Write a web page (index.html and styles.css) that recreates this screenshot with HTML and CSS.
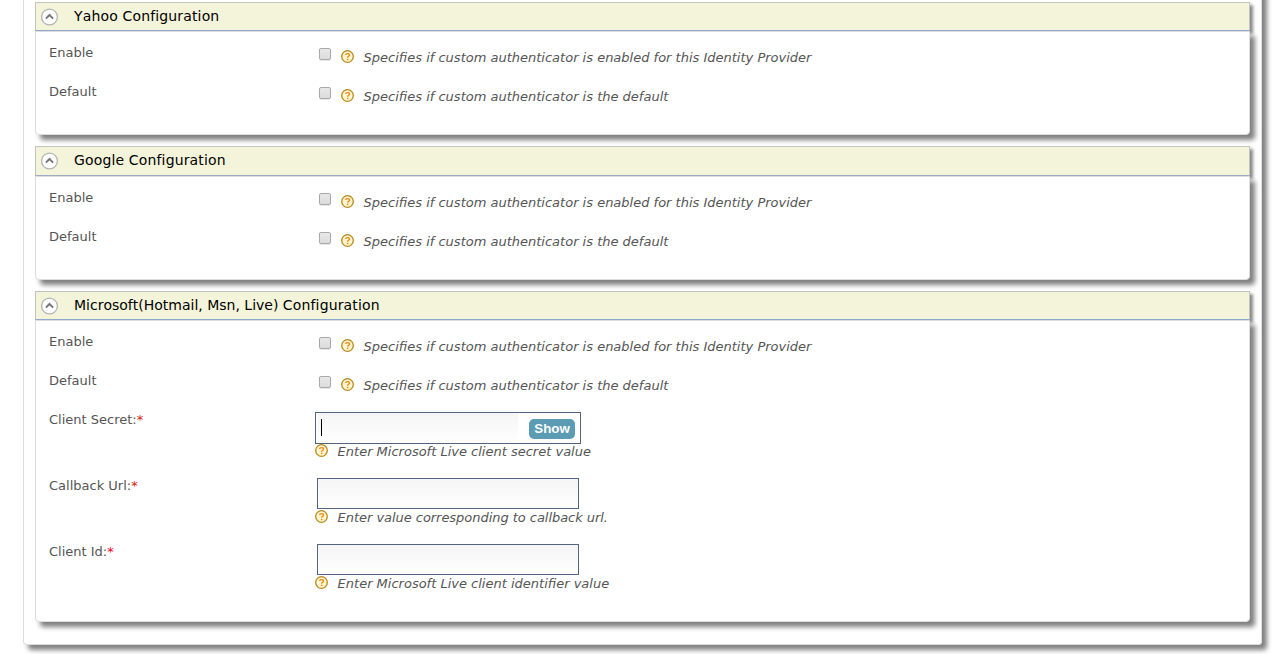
FILE: index.html
```
<!DOCTYPE html>
<html lang="en">
<head>
<meta charset="utf-8">
<title>Federated Authenticators</title>
<link rel="stylesheet" href="styles.css">
</head>
<body>
<svg class="defs" aria-hidden="true">
  <defs>
    <symbol id="chevron" viewBox="0 0 18 18">
      <circle cx="8.5" cy="9" r="7.9" fill="#fff" stroke="#b4b4b4" stroke-width="1.3"/>
      <path d="M4.9 10.6 8.5 7 12.1 10.6" fill="none" stroke="#777" stroke-width="2"/>
    </symbol>
    <symbol id="help" viewBox="0 0 13 13">
      <circle cx="6.5" cy="6.5" r="5.8" fill="#fff6cf" stroke="#b8891c" stroke-width="1.3"/>
      <path d="M4.6 5.1C4.6 3.2 8.5 3.1 8.5 5 8.5 6.3 6.6 6.2 6.6 7.8" fill="none" stroke="#ee8a22" stroke-width="1.4"/>
      <rect x="5.9" y="8.7" width="1.5" height="1.4" fill="#ee8a22"/>
    </symbol>
  </defs>
</svg>
<main class="panel">
  <section class="section">
    <h2 class="header"><svg class="toggle"><use href="#chevron"/></svg><span class="title wide">Yahoo Configuration</span></h2>
    <div class="body">
      <div class="row"><label class="label">Enable</label><div class="check"><input type="checkbox" class="box"><svg class="help"><use href="#help"/></svg><span class="hint">Specifies if custom authenticator is enabled for this Identity Provider</span></div></div>
      <div class="row"><label class="label">Default</label><div class="check"><input type="checkbox" class="box"><svg class="help"><use href="#help"/></svg><span class="hint">Specifies if custom authenticator is the default</span></div></div>
    </div>
  </section>
  <section class="section">
    <h2 class="header tall"><svg class="toggle"><use href="#chevron"/></svg><span class="title wide">Google Configuration</span></h2>
    <div class="body">
      <div class="row"><label class="label">Enable</label><div class="check"><input type="checkbox" class="box"><svg class="help"><use href="#help"/></svg><span class="hint">Specifies if custom authenticator is enabled for this Identity Provider</span></div></div>
      <div class="row"><label class="label">Default</label><div class="check"><input type="checkbox" class="box"><svg class="help"><use href="#help"/></svg><span class="hint">Specifies if custom authenticator is the default</span></div></div>
    </div>
  </section>
  <section class="section">
    <h2 class="header"><svg class="toggle"><use href="#chevron"/></svg><span class="title">Microsoft(Hotmail, Msn, Live) <span class="wide">Configuration</span></span></h2>
    <div class="body long">
      <div class="row"><label class="label">Enable</label><div class="check"><input type="checkbox" class="box"><svg class="help"><use href="#help"/></svg><span class="hint">Specifies if custom authenticator is enabled for this Identity Provider</span></div></div>
      <div class="row"><label class="label">Default</label><div class="check"><input type="checkbox" class="box"><svg class="help"><use href="#help"/></svg><span class="hint">Specifies if custom authenticator is the default</span></div></div>
      <div class="row field"><label class="label">Client Secret:<span class="required">*</span></label><div class="control"><div class="secret"><div class="entry"><span class="caret"></span></div><button class="show">Show</button></div><div class="note"><svg class="help"><use href="#help"/></svg><span class="hint">Enter Microsoft Live client secret value</span></div></div></div>
      <div class="row field"><label class="label">Callback Url:<span class="required">*</span></label><div class="control"><input type="text" class="text"><div class="note"><svg class="help"><use href="#help"/></svg><span class="hint tight">Enter value corresponding to callback url.</span></div></div></div>
      <div class="row field"><label class="label">Client Id:<span class="required bright">*</span></label><div class="control"><input type="text" class="text"><div class="note"><svg class="help"><use href="#help"/></svg><span class="hint">Enter Microsoft Live client identifier value</span></div></div></div>
    </div>
  </section>
</main>
</body>
</html>
```
FILE: styles.css
```
* { box-sizing: border-box; }
body {
  margin: 0;
  height: 654px;
  overflow: hidden;
  background: #fff;
  color: #555;
  font: 13px/16px "DejaVu Sans", Verdana, sans-serif;
}
.defs { display: none; }
.panel {
  width: 1239px;
  height: 655px;
  margin: -10px 0 0 23px;
  padding: 12px 11px 0;
  border: 1px solid #ddd;
  border-top: 0;
  border-radius: 0 0 4px 4px;
  box-shadow: 5px 5px 5px #808080;
}
.section { width: 1215px; margin-bottom: 11px; }
.header {
  display: flex;
  align-items: flex-start;
  gap: 15px;
  height: 29px;
  margin: 0;
  padding: 5px 5px 0;
  border: 1px solid #c3c3c3;
  border-bottom-color: #8fa9d0;
  background: #f4f4da;
  color: #000;
  font-size: 14px;
  font-weight: normal;
  font-kerning: none;
  line-height: 17px;
  box-shadow: 3px 3px 3px #888;
}
.header.tall { height: 30px; border-bottom-color: #a0abc5; }
.wide { letter-spacing: 0.15px; }
.toggle { flex: none; width: 18px; height: 18px; }
.body {
  position: relative;
  height: 104px;
  padding: 9px 13px 0;
  border: 1px solid #ddd;
  border-radius: 0 0 4px 4px;
  background: #fff;
  box-shadow: 5px 5px 5px #808080;
}
.body.long { height: 302px; }
.row { display: grid; grid-template-columns: 266px 1fr; height: 39px; }
.row.field { height: 66px; }
.label { padding-top: 4px; }
.required { color: #d3200a; }
.required.bright { color: #f02; }
.check { display: flex; align-items: flex-start; padding: 7px 0 0 4px; }
.box {
  appearance: none;
  flex: none;
  width: 12px;
  height: 12px;
  margin: 0 10px 0 0;
  border: 1px solid #a9a9a9;
  border-radius: 2px;
  background: linear-gradient(#e8e8e8, #dcdcdc);
  box-shadow: 0 1px 1px #e6e6e6;
}
.help { flex: none; width: 13px; height: 13px; }
.hint { font-style: italic; white-space: nowrap; }
.check .help { margin-top: 2px; }
.check .hint { margin-top: 2px; margin-left: 9.6px; }
.control { padding-top: 4px; }
.secret {
  display: flex;
  width: 266px;
  height: 32px;
  padding: 0 5px 0 2px;
  border: 1px solid #53657d;
  background: #fff;
}
.entry {
  width: 200px;
  height: 28px;
  padding: 6px 0 0 3px;
  background: linear-gradient(#f5f5f5, #fefefe);
}
.caret { display: block; width: 1px; height: 17px; background: #000; }
.show {
  width: 46px;
  height: 20px;
  margin: 6px 0 0 auto;
  padding: 0;
  border: 0;
  border-radius: 5px;
  background: #5b9bb3;
  color: #fff;
  font: bold 13.3px/20px "Liberation Sans", Arial, sans-serif;
}
.text {
  display: block;
  width: 262px;
  height: 31px;
  margin: 0 0 1px 2px;
  border: 1px solid #53657d;
  background: linear-gradient(#f5f5f5, #fff);
  outline: 0;
}
.note { display: flex; align-items: flex-start; }
.note .hint { margin-left: 9.6px; }
.note .tight { letter-spacing: -0.04px; }
```
